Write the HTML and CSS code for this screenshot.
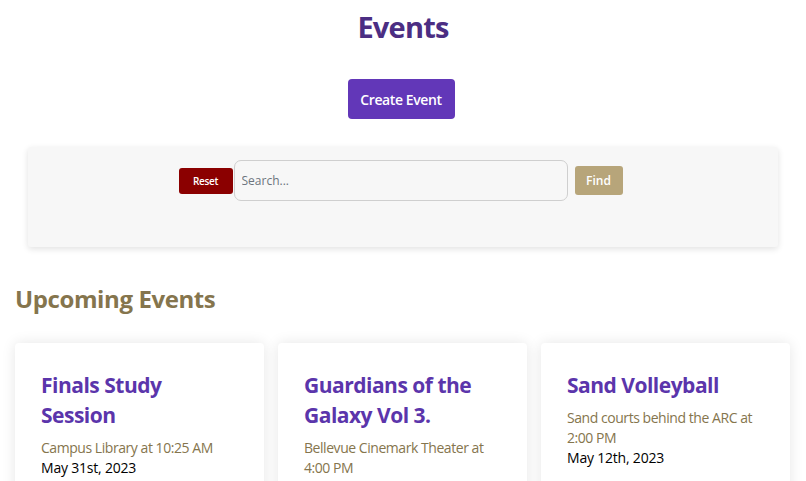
FILE: index.html
```html
<!DOCTYPE html>
<html lang="en">
<head>
<meta charset="utf-8">
<title>Events</title>
<link rel="stylesheet" href="styles.css">
</head>
<body>
<main class="page">
  <h1 class="page-title">Events</h1>
  <div class="create-row">
    <button class="btn-create" type="button">Create Event</button>
  </div>
  <section class="search-panel">
    <div class="search-row">
      <button class="btn-reset" type="button">Reset</button>
      <input class="search-input" type="text" placeholder="Search...">
      <button class="btn-find" type="button">Find</button>
    </div>
  </section>
  <h2 class="section-title">Upcoming Events</h2>
  <div class="cards">
    <article class="card">
      <h3 class="card-title">Finals Study Session</h3>
      <p class="card-loc">Campus Library at 10:25 AM</p>
      <p class="card-date">May 31st, 2023</p>
    </article>
    <article class="card">
      <h3 class="card-title">Guardians of the Galaxy Vol 3.</h3>
      <p class="card-loc">Bellevue Cinemark Theater at 4:00 PM</p>
      <p class="card-date">May 5th, 2023</p>
    </article>
    <article class="card">
      <h3 class="card-title">Sand Volleyball</h3>
      <p class="card-loc">Sand courts behind the ARC at 2:00 PM</p>
      <p class="card-date">May 12th, 2023</p>
    </article>
  </div>
</main>
</body>
</html>
```
FILE: styles.css
```css
* { box-sizing: border-box; }
html, body { margin: 0; padding: 0; background: #fff; }
body { font-family: "Open Sans", "Noto Sans", sans-serif; color: #000; }
.page { padding: 0 15px; }
.page-title {
  margin: 0;
  padding-top: 8px;
  text-align: center;
  font-size: 29px;
  line-height: 38px;
  font-weight: 700;
  letter-spacing: -0.8px;
  color: #4b2e83;
}
.create-row { display: flex; justify-content: center; margin-top: 33px; }
.btn-create {
  width: 107px; height: 40px;
  margin-left: -4px;
  border: 0; border-radius: 4px;
  background: #6237b8; color: #fff;
  font-family: inherit; font-size: 14px; font-weight: 600;
  letter-spacing: -0.4px;
}
.search-panel {
  margin: 28px 13px 0;
  height: 100px;
  background: #f7f7f7;
  border-radius: 3px;
  box-shadow: 0 2px 6px rgba(0,0,0,0.12);
  padding-top: 13px;
}
.search-row { display: flex; justify-content: center; align-items: center; padding-right: 5px; }
.btn-reset {
  width: 54px; height: 26px;
  border: 0; border-radius: 3px;
  background: #8b0000; color: #fff;
  font-family: inherit; font-size: 10px; font-weight: 600;
  letter-spacing: -0.3px;
}
.search-input {
  width: 334px; height: 41px;
  margin-left: 1px;
  border: 1.5px solid #cfcfcf; border-radius: 7px;
  background: #f7f7f7;
  padding: 0 7px;
  font-family: inherit; font-size: 12px; font-weight: 500;
}
.search-input::placeholder { color: #6c757d; }
.btn-find {
  width: 48px; height: 29px;
  margin-left: 7px;
  border: 0; border-radius: 3px;
  background: #b7a57a; color: #fff;
  font-family: inherit; font-size: 12px; font-weight: 600;
}
.section-title {
  margin: 36px 0 0;
  font-size: 24px; line-height: 32px; font-weight: 700;
  letter-spacing: -0.4px;
  color: #85754d;
}
.cards {
  display: grid;
  grid-template-columns: repeat(3, 249px);
  gap: 14px;
  margin-top: 28px;
}
.card {
  background: #fff;
  border-radius: 4px;
  box-shadow: 0 0 14px rgba(0,0,0,0.10);
  padding: 27px 26px 20px;
  height: 160px;
}
.card-title {
  margin: 0 0 8px;
  font-size: 21px; line-height: 30px; font-weight: 700;
  letter-spacing: -0.5px;
  color: #5b35ab;
}
.card-loc {
  margin: 0;
  font-size: 14px; line-height: 20px; font-weight: 500;
  letter-spacing: -0.45px;
  color: #85754d;
}
.card-date {
  margin: 0;
  font-size: 14px; line-height: 20px; font-weight: 500;
  letter-spacing: -0.2px;
  color: #000;
}
```
